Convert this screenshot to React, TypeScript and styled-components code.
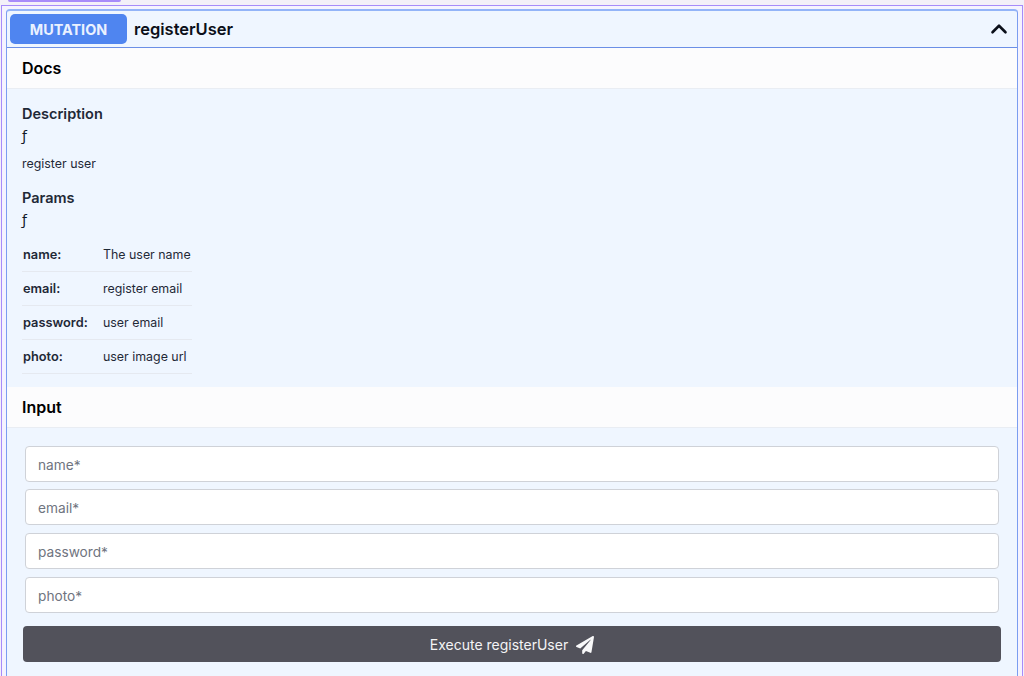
import { ChevronUp } from "lucide-react";
import { FaPaperPlane } from "react-icons/fa";
import styled, { createGlobalStyle } from "styled-components";

const GlobalStyle = createGlobalStyle`
  html, body {
    margin: 0;
    padding: 0;
    background: #f3f0f8;
    overflow: hidden;
  }
  * {
    box-sizing: border-box;
  }
  body {
    font-family: Inter, "Liberation Sans", sans-serif;
    color: #111827;
  }
`;

const Page = styled.div`
  width: 1024px;
  height: 676px;
  overflow: hidden;
`;

const PrevStrip = styled.div`
  height: 5px;
  padding-left: 8px;
`;

const PrevButton = styled.div`
  width: 113px;
  height: 2px;
  background: #a78bfa;
  border-radius: 0 0 4px 4px;
`;

const Frame = styled.div`
  height: 671px;
  margin: 0 1px;
  padding: 3px 4px 0 4px;
  border: 1px solid #a78bfa;
  border-bottom: 0;
  background: #f5f3ff;
`;

const Card = styled.section`
  height: 100%;
  background: #eff6ff;
  border: 1px solid #7b9df0;
  border-top: 2px solid #93b4f8;
  border-bottom: 0;
  border-radius: 4px 4px 0 0;
`;

const CardHeader = styled.header`
  height: 37px;
  padding: 3px 5px 3px 3px;
  display: flex;
  align-items: center;
  gap: 7px;
  border-bottom: 1px solid #6b8fe6;
`;

const Badge = styled.span`
  width: 117px;
  height: 30px;
  display: flex;
  align-items: center;
  justify-content: center;
  background: #4f85f0;
  border-radius: 5px;
  color: #eaf1ff;
  font-size: 14.4px;
  font-weight: 700;
`;

const OperationName = styled.h1`
  flex: 1;
  margin: 0;
  font-size: 16.5px;
  font-weight: 600;
  color: #0b0f19;
`;

const SectionBar = styled.div`
  height: 41px;
  padding: 0 15px;
  display: flex;
  align-items: center;
  background: #fcfcfd;
  border-bottom: 1px solid #e9edf3;
  font-size: 16px;
  font-weight: 600;
  color: #000;
`;

const Docs = styled.div`
  height: 298px;
  padding: 15px 15px 0;
`;

const DocTitle = styled.h3`
  margin: 0 0 1px;
  height: 20px;
  line-height: 20px;
  font-size: 14.5px;
  font-weight: 600;
  color: #1f2937;
`;

const Fn = styled.div`
  height: 23px;
  line-height: 23px;
  font-size: 14px;
  font-family: "DejaVu Sans", sans-serif;
  color: #111827;
`;

const DocText = styled.p`
  margin: 7px 0 16px;
  height: 17px;
  line-height: 17px;
  font-size: 12.4px;
  color: #1f2937;
`;

const ParamTable = styled.div`
  width: 170px;
  margin-top: 6px;
`;

const ParamRow = styled.div`
  height: 34px;
  padding: 0 0 1px 1px;
  display: grid;
  grid-template-columns: 80px 1fr;
  align-items: center;
  border-bottom: 1px solid #e5e9f0;
  font-size: 12.4px;
  color: #1f2937;
`;

const ParamName = styled.span`
  font-size: 12.8px;
  font-weight: 600;
`;

const Form = styled.form`
  padding: 17.7px 16px 0;
  display: flex;
  flex-direction: column;
`;

const Field = styled.input`
  width: 974px;
  height: 36px;
  margin: 0 0 7.8px 2px;
  padding: 2px 12px 0;
  flex: none;
  background: #fff;
  border: 1px solid #cfd2d8;
  border-radius: 4px;
  font-family: inherit;
  font-size: 13.7px;
  &::placeholder {
    color: #6f7480;
    opacity: 1;
  }
`;

const ExecuteButton = styled.button`
  width: 978px;
  height: 36px;
  margin-top: 5px;
  padding: 2px 0 0;
  flex: none;
  display: flex;
  align-items: center;
  justify-content: center;
  gap: 8px;
  background: #52525b;
  border: 0;
  border-radius: 4px;
  color: #f4f4f5;
  font-family: inherit;
  font-size: 14px;
`;

const params = [
  { name: "name:", text: "The user name" },
  { name: "email:", text: "register email" },
  { name: "password:", text: "user email" },
  { name: "photo:", text: "user image url" },
];

const fields = ["name*", "email*", "password*", "photo*"];

const App = () => {
  return (
    <Page>
      <GlobalStyle />
      <PrevStrip>
        <PrevButton />
      </PrevStrip>
      <Frame>
        <Card>
          <CardHeader>
            <Badge>MUTATION</Badge>
            <OperationName>registerUser</OperationName>
            <ChevronUp size={26} strokeWidth={2.4} color="#0b0f19" />
          </CardHeader>
          <SectionBar>Docs</SectionBar>
          <Docs>
            <DocTitle>Description</DocTitle>
            <Fn>ƒ</Fn>
            <DocText>register user</DocText>
            <DocTitle>Params</DocTitle>
            <Fn>ƒ</Fn>
            <ParamTable>
              {params.map((param) => (
                <ParamRow key={param.name}>
                  <ParamName>{param.name}</ParamName>
                  <span>{param.text}</span>
                </ParamRow>
              ))}
            </ParamTable>
          </Docs>
          <SectionBar>Input</SectionBar>
          <Form>
            {fields.map((field) => (
              <Field key={field} placeholder={field} />
            ))}
            <ExecuteButton type="button">
              Execute registerUser
              <FaPaperPlane size={18} color="#f8f8f9" />
            </ExecuteButton>
          </Form>
        </Card>
      </Frame>
    </Page>
  );
};

export default App;
